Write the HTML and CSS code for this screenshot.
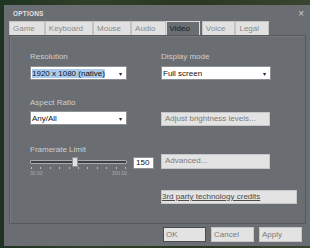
FILE: index.html
```html
<!DOCTYPE html>
<html lang="en">
<head>
<meta charset="UTF-8" />
<title>Options</title>
<link rel="stylesheet" href="styles.css">
</head>
<body>
<div class="dialog">
  <div class="titlebar">
    <span class="title">OPTIONS</span>
    <span class="close">&times;</span>
  </div>
  <div class="tabs">
    <div class="tab">Game</div>
    <div class="tab">Keyboard</div>
    <div class="tab">Mouse</div>
    <div class="tab">Audio</div>
    <div class="tab active">Video</div>
    <div class="tab">Voice</div>
    <div class="tab">Legal</div>
  </div>
  <div class="panel">
    <div class="col left">
      <div class="label">Resolution</div>
      <div class="select"><span class="selected">1920 x 1080 (native)</span><span class="arrow">&#9662;</span></div>
      <div class="label gap1">Aspect Ratio</div>
      <div class="select"><span>Any/All</span><span class="arrow">&#9662;</span></div>
      <div class="label gap2">Framerate Limit</div>
      <div class="slider-row">
        <div class="slider">
          <div class="track"><div class="thumb"></div></div>
          <div class="ticks">
            <i></i><i></i><i></i><i></i><i></i><i></i><i></i><i></i><i></i><i></i><i></i>
          </div>
          <div class="range"><span>30.00</span><span>300.00</span></div>
        </div>
        <div class="number">150</div>
      </div>
    </div>
    <div class="col right">
      <div class="label">Display mode</div>
      <div class="select"><span>Full screen</span><span class="arrow">&#9662;</span></div>
      <div class="btn brightness">Adjust brightness levels...</div>
      <div class="btn advanced">Advanced...</div>
      <div class="btn credits"><u>3rd party technology credits</u></div>
    </div>
  </div>
  <div class="footer">
    <div class="btn ok">OK</div>
    <div class="btn">Cancel</div>
    <div class="btn">Apply</div>
  </div>
</div>
</body>
</html>
```

FILE: styles.css
```css
body {
  margin: 0;
  height: 248px;
  overflow: hidden;
  background: linear-gradient(90deg, #1f3322, #31402a 30%, #2a3620 60%, #3a4530);
  font-family: "Liberation Sans", Arial, sans-serif;
  font-size: 8px;
}
.dialog {
  margin: 5px 0 0 4px;
  width: 306px;
  height: 241px;
  background: #6a6d71;
  display: flex;
  flex-direction: column;
}
.titlebar {
  height: 16px;
  display: flex;
  justify-content: space-between;
  align-items: center;
  padding: 0 6px 0 9px;
}
.title {
  color: #e2e2e2;
  font-weight: bold;
  font-size: 6.5px;
  letter-spacing: 0.2px;
}
.close {
  color: #d0d0d0;
  font-size: 10px;
}
.tabs {
  display: flex;
  height: 14px;
  margin-left: 5px;
}
.tab {
  background: #e1e1e1;
  color: #8a8a8a;
  border: 1px solid #c4c4c4;
  border-bottom: none;
  padding: 0 9px 0 3px;
  line-height: 13px;
}
.tab.active {
  background: #6a6d71;
  color: #1c1c1c;
  border-color: #dcdcdc;
  margin-right: 2px;
}
.panel {
  height: 189px;
  margin: 0 4px 0 5px;
  border: 1px solid #55585c;
  box-shadow: inset 1px 1px 0 #767a7e;
  box-sizing: border-box;
  display: flex;
  gap: 7px;
  padding: 16px 0 0 20px;
}
.col {
  display: flex;
  flex-direction: column;
  align-items: flex-start;
}
.col.left {
  width: 124px;
}
.label {
  color: #cfcfcf;
  line-height: 10px;
  height: 10px;
  margin-bottom: 4px;
}
.gap1 { margin-top: 18px; margin-bottom: 3px; }
.gap2 { margin-top: 20px; margin-bottom: 1px; }
.select {
  box-sizing: border-box;
  width: 97px;
  height: 14px;
  background: #fff;
  border: 1px solid #8d9094;
  display: flex;
  justify-content: space-between;
  align-items: center;
  padding: 0 4px 0 1px;
  color: #111;
}
.right .select {
  width: 110px;
}
.selected {
  background: #a9c9ee;
}
.arrow {
  font-size: 6px;
  color: #222;
}
.slider-row {
  display: flex;
  align-items: flex-start;
  gap: 6px;
}
.slider {
  width: 97px;
  padding-top: 4px;
}
.track {
  position: relative;
  height: 2px;
  background: #3e4044;
  border: 1px solid #a8abaf;
  border-radius: 1px;
}
.thumb {
  position: absolute;
  left: 41px;
  top: -4px;
  width: 4px;
  height: 8px;
  background: #e0e0e0;
  border: 1px solid #8e9195;
}
.ticks {
  display: flex;
  justify-content: space-between;
  padding: 0 1px;
  margin-top: 3px;
}
.ticks i {
  width: 1px;
  height: 2px;
  background: #bcbcbc;
}
.range {
  display: flex;
  justify-content: space-between;
  color: #a9abad;
  font-size: 5px;
  line-height: 6px;
  margin-top: 1px;
}
.number {
  box-sizing: border-box;
  width: 21px;
  height: 12px;
  margin-top: 1px;
  background: #fff;
  border: 1px solid #8d9094;
  color: #111;
  line-height: 10px;
  padding-left: 2px;
}
.btn {
  box-sizing: border-box;
  background: #e3e3e3;
  border: 1px solid #c6c6c6;
  color: #7a7a7a;
  height: 14px;
  line-height: 12px;
  padding-left: 3px;
}
.brightness {
  width: 109px;
  margin-top: 32px;
}
.advanced {
  width: 109px;
  height: 15px;
  margin-top: 28px;
}
.credits {
  width: 136px;
  margin-top: 21px;
  padding-left: 0;
  color: #4a4a4a;
}
.footer {
  display: flex;
  justify-content: flex-end;
  gap: 5px;
  padding: 3px 8px 0 0;
}
.footer .btn {
  width: 43px;
  height: 15px;
  line-height: 13px;
  padding-left: 2px;
}
.footer .ok {
  border-color: #4a4c50;
}
```
